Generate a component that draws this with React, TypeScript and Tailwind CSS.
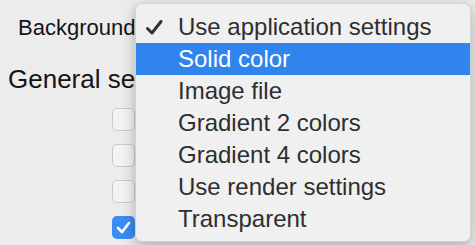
const items = [
  "Use application settings",
  "Solid color",
  "Image file",
  "Gradient 2 colors",
  "Gradient 4 colors",
  "Use render settings",
  "Transparent",
];

function Box({ checked }: { checked?: boolean }) {
  if (checked) {
    return (
      <div className="w-[23px] h-[23px] rounded-[5px] bg-[#3a8bf2] flex items-center justify-center">
        <svg width="15" height="13" viewBox="0 0 15 13">
          <path d="M2 7 L6 11 L13 2" fill="none" stroke="#fff" strokeWidth="2.6" strokeLinecap="round" strokeLinejoin="round" />
        </svg>
      </div>
    );
  }
  return <div className="w-[23px] h-[23px] rounded-[5px] border border-[#c9c9c9] bg-[#f3f3f3]" />;
}

export default function App() {
  return (
    <div className="relative w-[475px] h-[245px] overflow-hidden bg-[#ececec] font-['Liberation_Sans',Arial,sans-serif]">
      {/* left side is mostly hidden behind the popup */}
      <div className="w-[135px] overflow-hidden whitespace-nowrap">
        <div className="pt-[12px] pl-[18px] text-[22px] leading-[32px] text-[#141414]">Background</div>
        <div className="mt-[19px] pl-[8px] text-[26px] leading-[32px] text-[#141414]">General settings</div>
      </div>
      <div className="mt-[13px] pl-[112px] flex flex-col gap-[13px]">
        <Box />
        <Box />
        <Box />
        <Box checked />
      </div>

      <div className="absolute left-[135px] top-[3px] w-[336px] h-[239px] rounded-[7px] bg-[#f0f0f0] border border-[#d2d2d2] shadow-[0_4px_14px_rgba(0,0,0,0.28)] pt-[7px]">
        {items.map((t, i) => (
          <div
            key={t}
            className={
              i === 1
                ? "flex items-center h-[32px] bg-[#2f84ee] text-white"
                : "flex items-center h-[32px] text-[#2e2e2e]"
            }
          >
            <div className="w-[42px] flex pl-[10px]">
              {i === 0 && (
                <svg width="17" height="15" viewBox="0 0 17 15">
                  <path d="M1.5 8.5 L6 13 L15 1.5" fill="none" stroke="#333" strokeWidth="3" strokeLinecap="round" strokeLinejoin="round" />
                </svg>
              )}
            </div>
            <span className="text-[24px] leading-[32px]">{t}</span>
          </div>
        ))}
      </div>
    </div>
  );
}
